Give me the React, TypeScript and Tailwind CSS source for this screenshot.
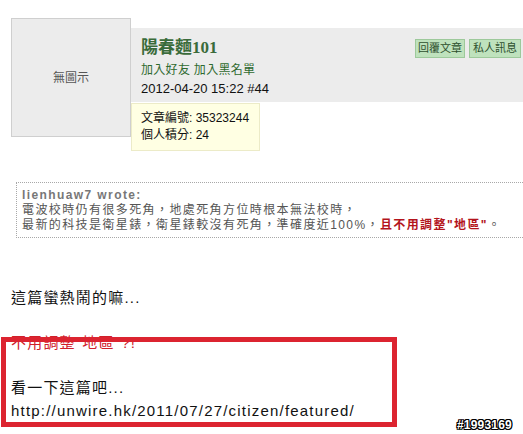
import React from 'react';

const sans = '[font-family:"Liberation_Sans","Noto_Sans_CJK_TC",sans-serif]';

export default function App() {
  return (
    <div className={`relative w-[523px] h-[434px] overflow-hidden bg-white ${sans}`}>
      {/* poster header */}
      <div className="flex pt-[18px] pl-[11px]">
        <div className="w-[120px] h-[119px] shrink-0 border border-[#cfcfcf] bg-[#ececec] flex items-center justify-center text-[12px] text-[#555]">
          無圖示
        </div>
        <div className="flex-1 pt-[10px]">
          <div className="h-[74px] bg-[#ececec] flex justify-between pl-[10px] pr-[2px] pt-[10px]">
            <div>
              <div className="[font-family:'Liberation_Serif','Noto_Sans_CJK_TC',serif] font-bold text-[17px] leading-[19px] text-[#3a6b3a]">
                陽春麵101
              </div>
              <div className="mt-[6px] text-[12px] leading-[14px] text-[#2f6a2f] tracking-[0.3px]">加入好友 加入黑名單</div>
              <div className="mt-[4px] text-[13px] leading-[15px] text-[#111]">2012-04-20 15:22 #44</div>
            </div>
            <div className="flex gap-[4px] items-start pt-[1px]">
              <span className="h-[19px] w-[50px] flex items-center justify-center bg-[#bfe2bd] border border-[#9dc99b] text-[11px] text-[#2d4f2d]">
                回覆文章
              </span>
              <span className="h-[19px] w-[52px] flex items-center justify-center bg-[#bfe2bd] border border-[#9dc99b] text-[11px] text-[#2d4f2d]">
                私人訊息
              </span>
            </div>
          </div>
          <div className="mt-[1px] w-[129px] h-[48px] bg-[#ffffe3] border border-[#ecebc8] pl-[9px] pt-[6px] text-[12px] leading-[17px] text-[#111]">
            <div>文章編號: 35323244</div>
            <div>個人積分: 24</div>
          </div>
        </div>
      </div>

      {/* quote */}
      <div className="ml-[16px] mt-[31px] w-[507px] h-[56px] border border-r-0 border-dotted border-[#a8a8a8] pl-[5px] pt-[5px] text-[12px] leading-[15px] tracking-[1.4px] text-[#555]">
        <div className="font-bold text-[#777] leading-[15px]">lienhuaw7 wrote:</div>
        <div>電波校時仍有很多死角，地處死角方位時根本無法校時，</div>
        <div className="whitespace-nowrap">
          最新的科技是衛星錶，衛星錶較沒有死角，準確度近100%，
          <span className="font-bold text-[#b3141c]">且不用調整"地區"</span>。
        </div>
      </div>

      {/* reply body */}
      <div className="pl-[11px] mt-[49px] text-[15px] leading-[22.5px] tracking-[1.2px] text-[#111]">
        <div>這篇蠻熱鬧的嘛...</div>
        <div>&nbsp;</div>
        <div className="text-[#d0202a]">不用調整"地區"?!</div>
        <div>&nbsp;</div>
        <div>看一下這篇吧...</div>
        <div>http://unwire.hk/2011/07/27/citizen/featured/</div>
      </div>

      {/* red annotation frame */}
      <div className="absolute left-[1px] top-[337px] w-[396px] h-[90px] border-[5px] border-[#dc2430]" />

      {/* watermark */}
      <div className="absolute left-[457px] top-[418px] text-[12px] leading-[14px] font-bold text-white tracking-[0.2px] [text-shadow:1px_0_0_#000,-1px_0_0_#000,0_1px_0_#000,0_-1px_0_#000,1px_1px_0_#000,-1px_-1px_0_#000,1px_-1px_0_#000,-1px_1px_0_#000]">
        #1993169
      </div>
    </div>
  );
}
